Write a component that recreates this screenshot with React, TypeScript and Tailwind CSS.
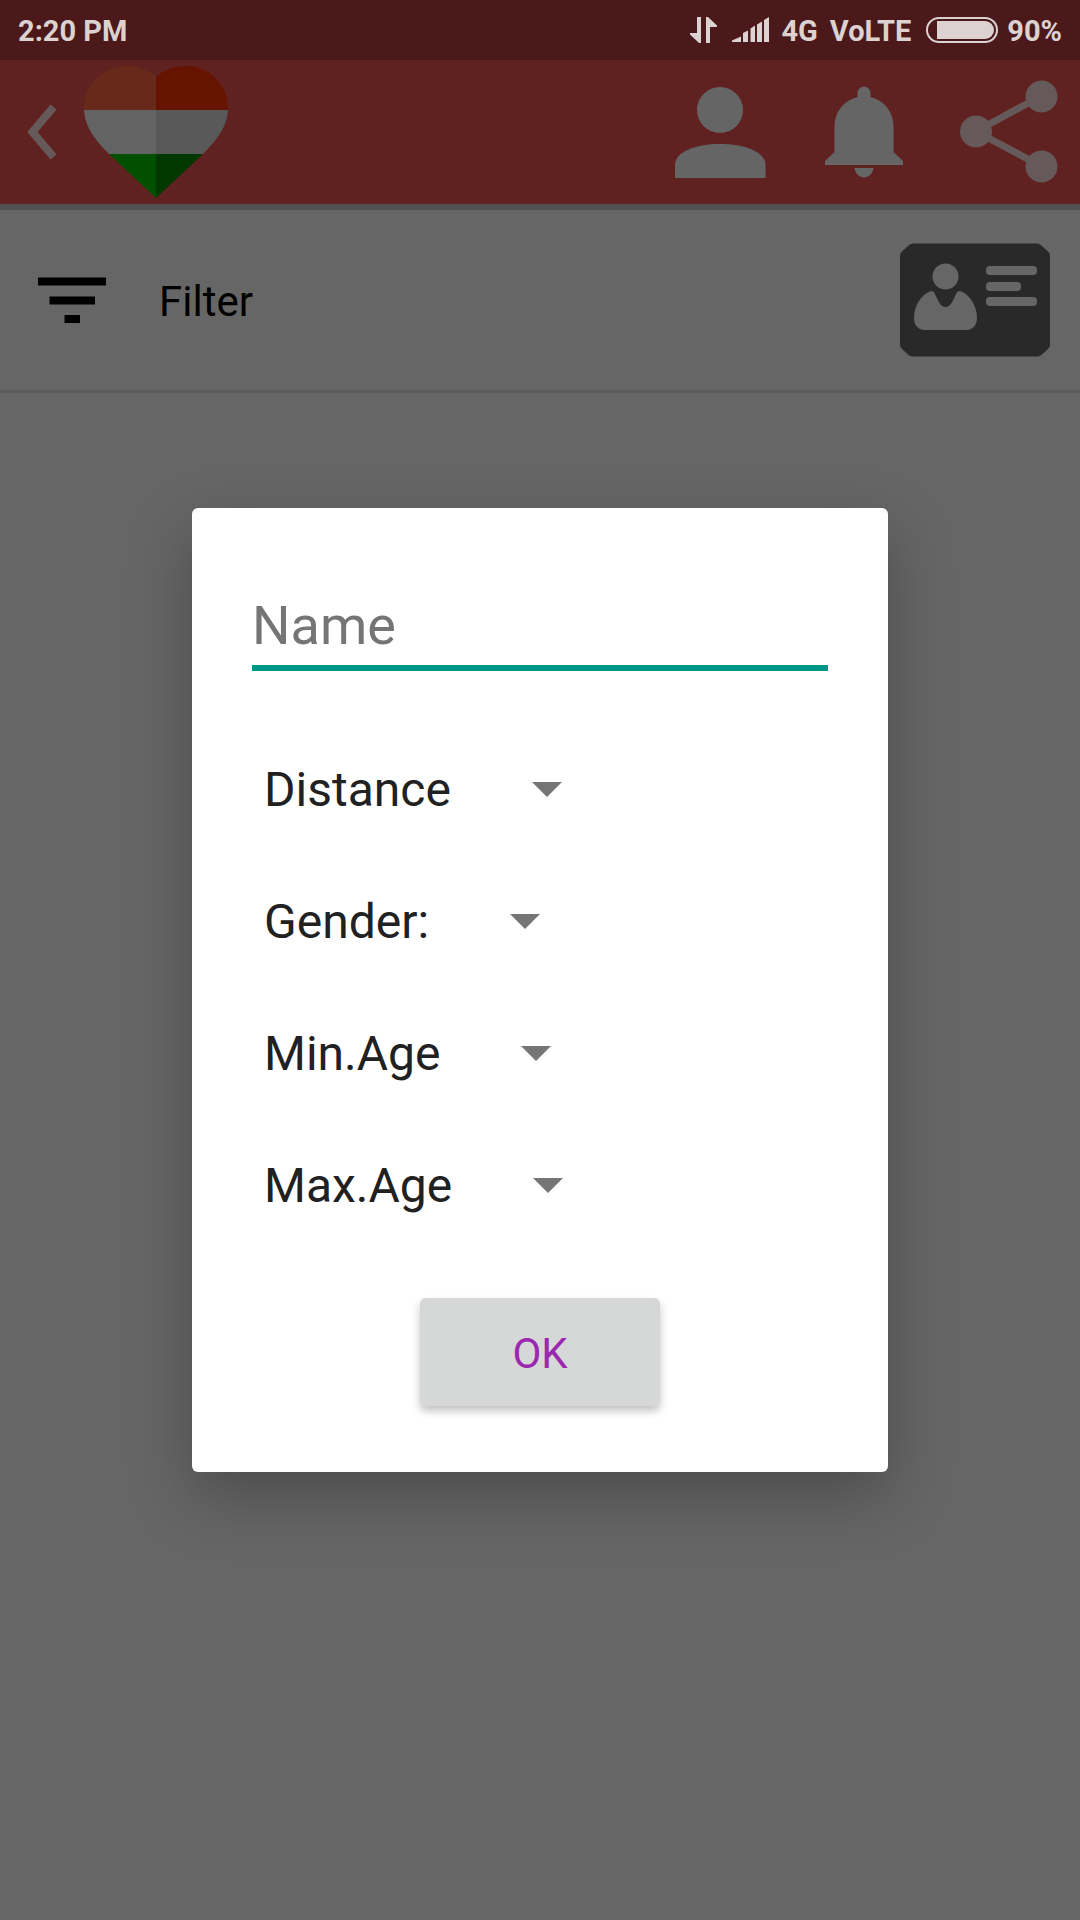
import React from "react";

const fields = [
  { id: "distance", label: "Distance" },
  { id: "gender", label: "Gender:" },
  { id: "min-age", label: "Min.Age" },
  { id: "max-age", label: "Max.Age" },
];

function StatusBar() {
  return (
    <div className="flex h-[60px] items-center justify-between bg-[#4b1919] px-[18px] text-[29px] leading-[36px] font-bold text-[#ddd2d2]">
      <span className="pt-[2px]">2:20 PM</span>
      <div className="flex items-center">
        <svg className="mr-[15px] h-[26px] w-[27px]" viewBox="0 0 27 26" fill="currentColor" aria-hidden="true">
          <path d="M7 0h4v26H9L0 17.500V16h7z" />
          <path d="M16 0h2l9 8.500V10h-7v16h-4z" />
        </svg>
        <svg className="mr-[12px] h-[26px] w-[37px]" viewBox="0 0 37 26" fill="currentColor" aria-hidden="true">
          <path d="M0 25V23.500L9 19.500V25z M11 25V16l5-2.500V25z M18.500 25V11.500l4.500-3V25z M25 25V7.500l5-3V25z M32 25V3l5-3V25z" />
        </svg>
        <span className="mr-[12px] pt-[2px]">4G</span>
        <span className="mr-[15px] pt-[2px]">VoLTE</span>
        <svg className="mr-[9px] h-[26px] w-[72px]" viewBox="0 0 72 26" aria-hidden="true">
          <rect x="1" y="1" width="70" height="24" rx="12" fill="none" stroke="currentColor" strokeWidth="2" />
          <path d="M11 4h48a9 9 0 0 1 0 18H11z" fill="currentColor" />
        </svg>
        <span className="pt-[2px]">90%</span>
      </div>
    </div>
  );
}

function Header() {
  return (
    <header className="flex h-[150px] items-center border-b-[6px] border-[#525252] bg-[#602121] pr-[22px] pl-[27px] text-[#656565]">
      <button aria-label="Back" className="mr-[27px] flex h-full items-center">
        <svg className="h-[56px] w-[30px]" viewBox="0 0 30 56" fill="none" stroke="#665959" strokeWidth="8">
          <path d="M26.500 3L5.500 28l21 25" />
        </svg>
      </button>
      <svg className="h-[144px] w-[144px]" viewBox="84 60 144 144" role="img" aria-label="Logo">
        <defs>
          <clipPath id="heart">
            <path d="M156 198L109 154C95 140 84 126 84 108C84 84 103 66 126 66C138 66 148 70 156 77C164 70 174 66 186 66C209 66 228 84 228 108C228 126 217 140 203 154Z" />
          </clipPath>
        </defs>
        <g clipPath="url(#heart)">
          <path fill="#66291a" d="M84 60h72v50H84z" />
          <path fill="#661400" d="M156 60h72v50h-72z" />
          <path fill="#636363" d="M84 110h72v44H84z" />
          <path fill="#595959" d="M156 110h72v44h-72z" />
          <path fill="#005000" d="M84 154h72v44H84z" />
          <path fill="#003800" d="M156 154h72v44h-72z" />
        </g>
      </svg>
      <div className="ml-auto flex items-center">
        <button aria-label="Profile" className="mr-[58px]">
          <svg className="block h-[92px] w-[92px]" viewBox="674 85 92 92" fill="currentColor">
            <circle cx="720" cy="109" r="23" />
            <path d="M675 177V164C675 151 695 143 720 143S765.500 151 765.500 164V177Z" />
          </svg>
        </button>
        <button aria-label="Notifications" className="mr-[56px]">
          <svg className="block h-[92px] w-[80px]" viewBox="824 86 80 92" fill="currentColor">
            <path d="M857.500 97V93a6.500 6.500 0 0 1 13 0v4C885 101 893.500 112 893.500 127V152L903 161V165H825V161L834.500 152V127C834.500 112 843 101 857.500 97Z" />
            <path d="M854.500 168h19c-1 6-5 9.500-9.500 9.500s-8.500-3.500-9.500-9.500z" />
          </svg>
        </button>
        <button aria-label="Share">
          <svg className="block h-[104px] w-[98px]" viewBox="960 80 98 104" fill="#665959">
            <path d="M1041 96L976 131.500L1041 166" fill="none" stroke="#665959" strokeWidth="7" />
            <circle cx="976" cy="131.500" r="16" />
            <circle cx="1041.500" cy="96.500" r="16" />
            <circle cx="1041.500" cy="166.500" r="16" />
          </svg>
        </button>
      </div>
    </header>
  );
}

function FilterRow() {
  return (
    <div className="flex h-[183px] items-center justify-between border-b-[3px] border-[#5c5c5c] pr-[30px] pl-[38px]">
      <button className="flex items-center gap-[53px] text-[42px] leading-[48px] text-black">
        <svg className="h-[46px] w-[68px]" viewBox="0 0 68 46" aria-hidden="true">
          <path d="M0 0.500h68v8H0z M11.500 19.500h45.500v8H11.500z M26.500 38h15.500v8H26.500z" />
        </svg>
        <span className="pt-[4px]">Filter</span>
      </button>
      <button aria-label="Contact card">
        <svg className="block h-[114px] w-[150px]" viewBox="0 0 150 114" fill="#666">
          <path fill="#292929" d="M13 0.500H137Q140 0.500 142 3L148 8.500Q150 10 150 12V102Q150 104 148 106L142 111.500Q140 113.500 137 113.500H13Q10 113.500 8 111.500L2 106Q0 104 0 102V12Q0 10 2 8.500L8 3Q10 0.500 13 0.500Z" />
          <circle cx="45.500" cy="33.500" r="13" />
          <path d="M31 48C33 48 34 49 35 51C38 57 40 64 45.500 64S53 57 56 51C57 49 58 48 60 48C71 52 77 64 77 75C77 82 73 86.500 67 87H24C18 86.500 14 82 14 75C14 64 20 52 31 48Z" />
          <rect x="86" y="23" width="51" height="9" rx="4" />
          <rect x="86" y="39" width="35" height="9" rx="4" />
          <rect x="86" y="54" width="51" height="9" rx="4" />
        </svg>
      </button>
    </div>
  );
}

function SpinnerField({ id, label }: { id: string; label: string }) {
  return (
    <div className="flex h-[132px] items-center pl-[12px]">
      <label htmlFor={id} className="text-[48px] leading-[56px] text-[#212121]">
        {label}
      </label>
      <div className="ml-[48px] grid h-[72px] w-[96px] items-center justify-items-center">
        <select id={id} className="col-start-1 row-start-1 h-full w-full appearance-none bg-transparent outline-none">
          <option value="" />
        </select>
        <svg className="pointer-events-none col-start-1 row-start-1 h-[16px] w-[30px]" viewBox="0 0 30 16" fill="#757575" aria-hidden="true">
          <path d="M0 0h30L15 15z" />
        </svg>
      </div>
    </div>
  );
}

function FilterDialog() {
  return (
    <form
      role="dialog"
      aria-label="Filter"
      onSubmit={(e) => e.preventDefault()}
      className="flex w-[696px] max-w-full flex-col rounded-[6px] bg-white px-[60px] pt-[79px] pb-[66px] shadow-[0_24px_64px_rgba(0,0,0,0.26)]"
    >
      <input
        type="text"
        aria-label="Name"
        placeholder="Name"
        className="mb-[53px] h-[84px] w-full border-b-[6px] border-[#009688] pb-[2px] text-[54px] leading-[64px] text-[#212121] outline-none placeholder:text-[#757575]"
      />
      {fields.map((f) => (
        <SpinnerField key={f.id} id={f.id} label={f.label} />
      ))}
      <button
        type="submit"
        className="mt-[46px] h-[108px] w-[240px] self-center rounded-[6px] bg-[#d6d7d7] pt-[4px] text-[42px] leading-[48px] text-[#9c27b0] shadow-[0_5px_8px_rgba(0,0,0,0.24)]"
      >
        OK
      </button>
    </form>
  );
}

export default function App() {
  return (
    <div className="relative flex min-h-screen flex-col bg-[#666] font-[Roboto,sans-serif]">
      <StatusBar />
      <Header />
      <FilterRow />
      <div className="absolute inset-0 flex items-center justify-center pt-[60px]">
        <FilterDialog />
      </div>
    </div>
  );
}
